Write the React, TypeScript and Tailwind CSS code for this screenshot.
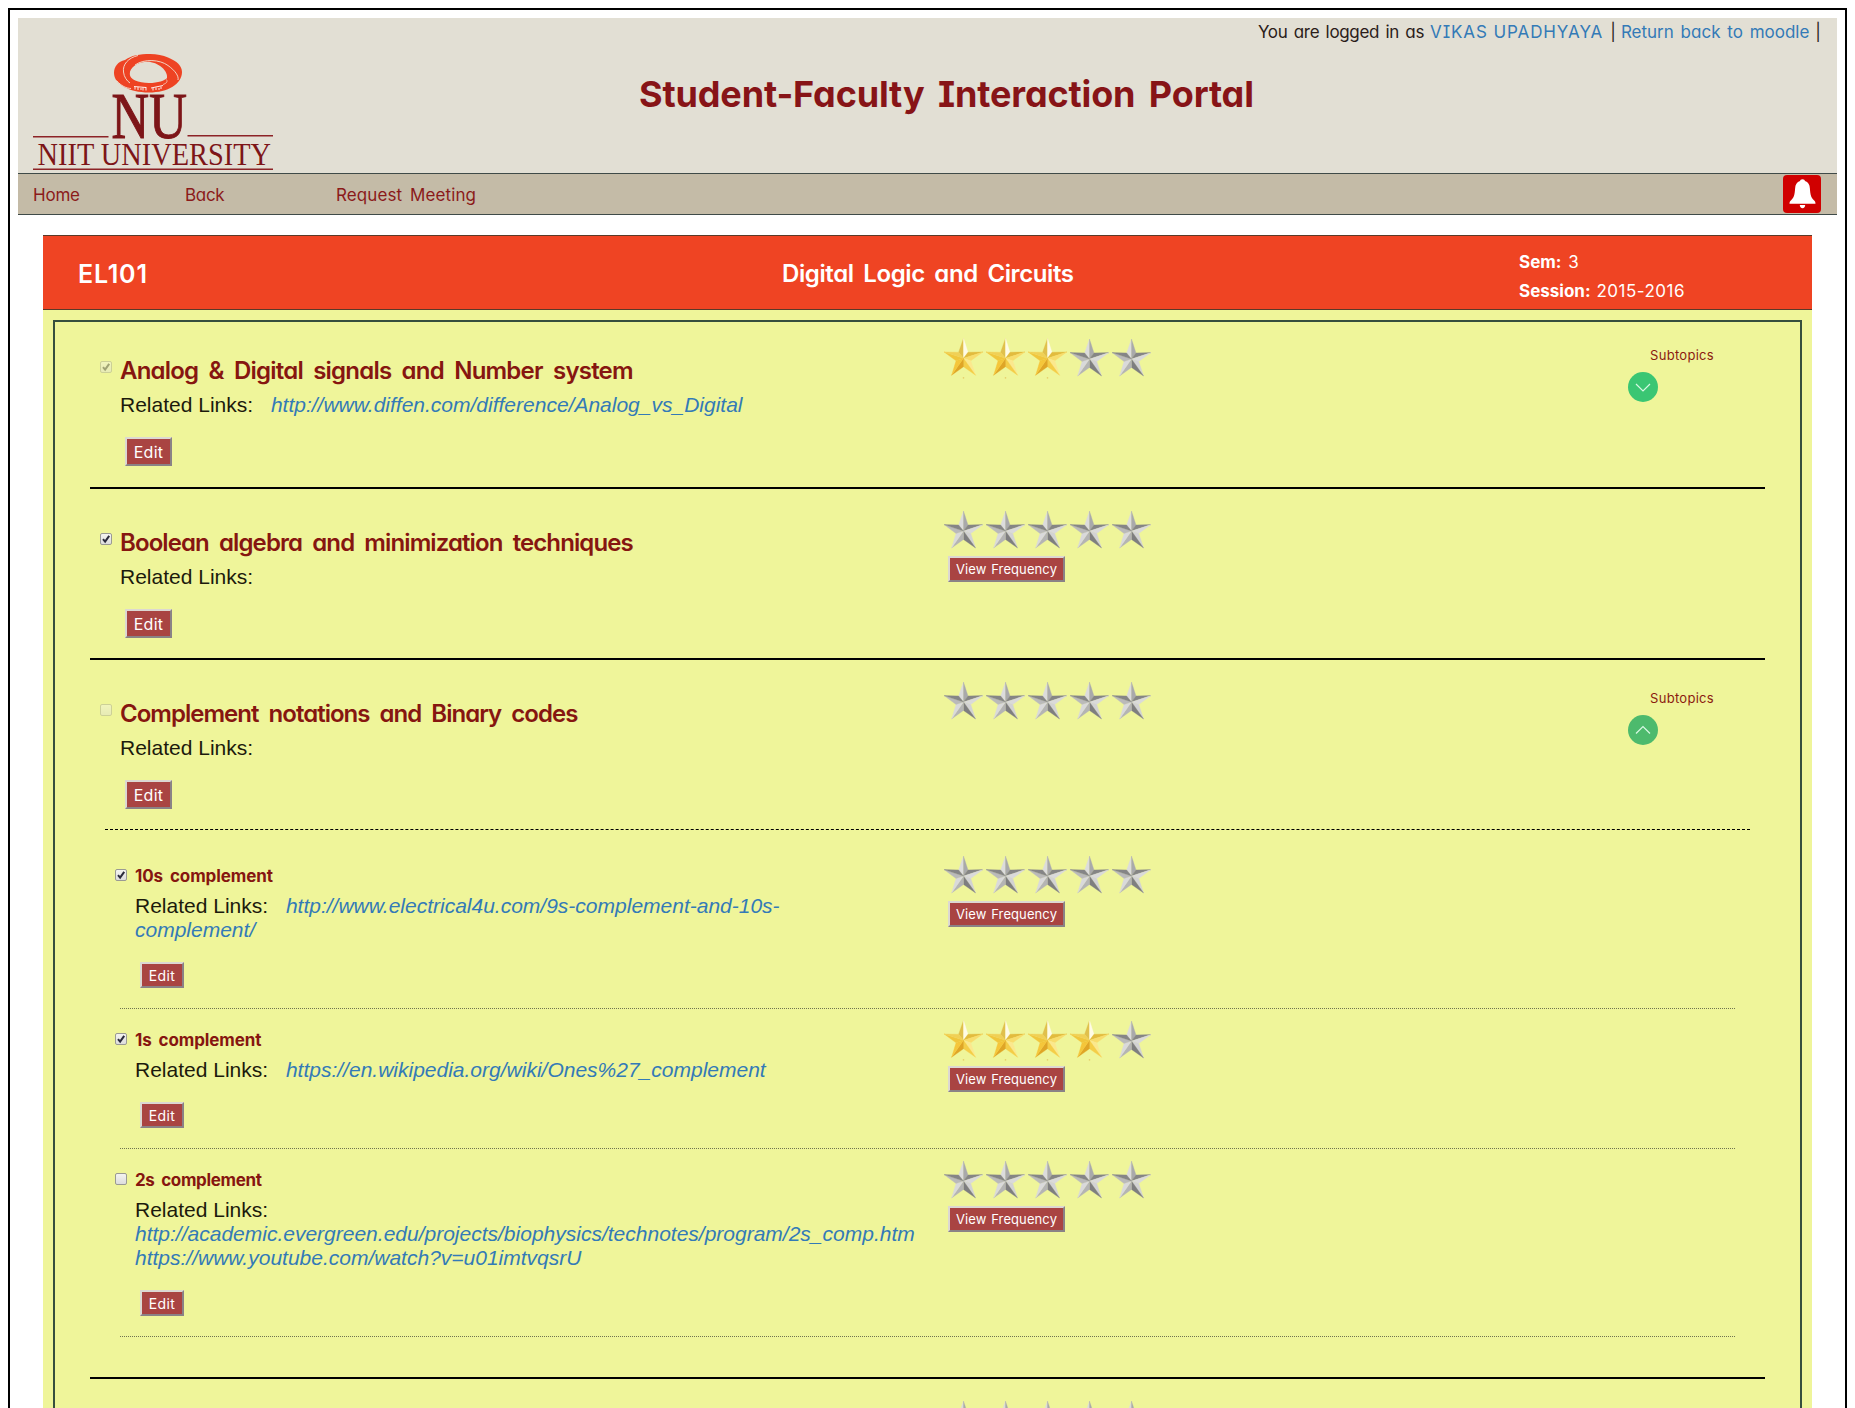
import type { ReactNode } from "react";

const COMIC =
  "font-['Comic_Sans_MS',Inter,sans-serif] [font-feature-settings:'cv11','cv08'] whitespace-nowrap";

function Logo() {
  return (
    <svg className="ml-[15px] mt-[32px] h-[123px] w-[241px] shrink-0 overflow-visible" viewBox="33 50 241 123">
      <path
        fill="#ee4323"
        fillRule="evenodd"
        d="M125 60 C131 55.5 140 54 150 54 C157 54 163 55.2 168 57.5 C177 61 182 66 182 72 C182 84 168 92.5 149 92.5 C129 92.5 114 84 114 73 C114 66.5 118 61.5 125 60 Z M146 61.800 C137 62.500 129.800 67.500 129.800 74 C129.800 79.500 138 83 149 83 C158 83 165 80.500 167 78 C167.500 75 166 71 162 67.500 C158 64 152 61.500 146 61.800 Z"
      />
      <g fill="none" stroke="#f3e3d4" strokeWidth="0.900">
        <path d="M138 55.500 C128 58 122.500 64.500 123.500 72 C124 77 127 81 130 83" />
        <path d="M135 65 C144 58.500 160 59.500 168 65.500 C175 70.500 179 76 178 80" />
        <path d="M116.500 80.500 C121 86 127 88.500 131 88.500" />
        <path d="M166.500 79.500 C168 82 166 83.500 163 84.500" strokeWidth="0.700" />
      </g>
      <path
        d="M134 86.500 L146 87.500 M135 87 v2.500 M138 87 v3 M140 89 h2 M143 87.500 v3 M146 87 v3.500 M151 88 L163 85.500 M153 88 v2.500 M156 87.500 v2.500 M158 89 h2 M161 86.500 v2.500"
        stroke="#fff"
        strokeWidth="0.900"
        fill="none"
      />
      <g fill="#7d1518" className="font-['Liberation_Serif',serif]">
        <text x="111.500" y="138" fontSize="65" textLength="37.500" lengthAdjust="spacingAndGlyphs" stroke="#7d1518" strokeWidth="1.200">
          N
        </text>
        <text x="149" y="138" fontSize="65" textLength="38" lengthAdjust="spacingAndGlyphs" stroke="#7d1518" strokeWidth="0.900">
          U
        </text>
        <text x="37.500" y="164.500" fontSize="30.500" textLength="233.500" lengthAdjust="spacingAndGlyphs">
          NIIT UNIVERSITY
        </text>
      </g>
      <path d="M33 136.800 H108.500 M187.500 135.700 H273 M33 169.300 H273" stroke="#8c2326" strokeWidth="1.500" />
    </svg>
  );
}

function BellButton() {
  return (
    <button className="mr-4 h-[38px] w-[38px] rounded bg-[#d00000]">
      <svg className="h-[38px] w-[38px]" viewBox="0 0 38 38" fill="#fff">
        <path d="M19.500 4.300 c1.600 0 2.300 .9 2.500 1.800 c3.200 1 4.700 3.800 4.900 7.400 c.4 6.500 1.300 9.300 4 11.700 c1.200 1 1.600 2 1.600 3.600 H6.500 c0-1.600 .4-2.600 1.600-3.600 c2.700-2.400 3.600-5.200 4-11.700 c.2-3.600 1.700-6.400 4.900-7.400 c.2-.9 .9-1.800 2.500-1.800Z" />
        <path d="M16.800 30 h5.400 c0 2-1.200 3.200-2.700 3.200 s-2.700-1.200-2.700-3.200Z" />
      </svg>
    </button>
  );
}

const FACETS = [
  "20.500,2 20.500,22 15.600,15.900",
  "20.500,2 25,15.900 20.500,22",
  "25,15.900 40,15.600 20.500,22",
  "40,15.600 27.800,24.500 20.500,22",
  "27.800,24.500 32.600,39 20.500,22",
  "32.600,39 20.500,30.500 20.500,22",
  "20.500,30.500 8.600,39 20.500,22",
  "8.600,39 13,24.500 20.500,22",
  "13,24.500 1,15.600 20.500,22",
  "1,15.600 15.600,15.900 20.500,22",
];
const SILVER = ["#dcdcdc", "#a9a9ab", "#858585", "#dadada", "#d2d2d4", "#7e7e80", "#b4b4b4", "#d9d9db", "#bababa", "#858587"];
const GOLD = ["#e0c04c", "#fffbe6", "#e2bb3e", "#f8dc6c", "#fbe88e", "#f4cd48", "#dfa526", "#f5c63a", "#f0c63c", "#f0d056"];

function Star({ gold }: { gold: boolean }) {
  const colors = gold ? GOLD : SILVER;
  return (
    <svg className="h-[42px] w-[42px]" viewBox={gold ? "0 0.700 42 42" : "0 0 42 42"}>
      {FACETS.map((points, i) => (
        <polygon key={i} points={points} fill={colors[i]} stroke={colors[i]} strokeWidth="0.300" />
      ))}
      {gold && <circle cx="20.500" cy="41.600" r="0.800" fill="#e6cf6a" />}
    </svg>
  );
}

function Stars({ rating }: { rating: number }) {
  return (
    <div className="flex">
      {[1, 2, 3, 4, 5].map((n) => (
        <Star key={n} gold={n <= rating} />
      ))}
    </div>
  );
}

const BEVEL =
  "border-2 border-t-[#dcd8d2] border-l-[#dcd8d2] border-r-[#8a8286] border-b-[#8a8286] bg-[#a94442] text-white flex items-center justify-center";

function EditButton({ small }: { small?: boolean }) {
  return small ? (
    <button className={`${COMIC} ${BEVEL} ml-[5px] mt-5 h-[26px] w-[44px] text-[14px] tracking-[0.4px]`}>Edit</button>
  ) : (
    <button className={`${COMIC} ${BEVEL} ml-[5px] mt-5 h-[29px] w-[47px] text-[16px] tracking-[0.3px]`}>Edit</button>
  );
}

function Checkbox({ checked, disabled }: { checked?: boolean; disabled?: boolean }) {
  const tone = disabled ? "opacity-40" : "";
  return (
    <span
      className={`${tone} block h-3 w-3 shrink-0 rounded-[2px] border border-[#9a9a94] bg-gradient-to-b from-[#f4f4f0] to-[#dddddd]`}
    >
      {checked && (
        <svg className="h-[10px] w-[10px]" viewBox="0 0 10 10">
          <path d="M2 5.200 L4.100 7.600 L8.200 1.800" fill="none" stroke="#2b2b3c" strokeWidth="2" />
        </svg>
      )}
    </span>
  );
}

function Subtopics({ open }: { open: boolean }) {
  const offset = open ? "mt-7" : "mt-[23px]";
  const color = open ? "bg-[#4dba6d]" : "bg-[#3ac673]";
  return (
    <div className={offset}>
      <div className={`${COMIC} ml-[22px] h-5 text-[13px] leading-5 tracking-[0.3px] text-[#8b1a10]`}>Subtopics</div>
      <div className={`${color} mt-[7px] h-[30px] w-[30px] rounded-full`}>
        <svg className="h-[30px] w-[30px]" viewBox="0 0 30 30" fill="none" stroke="#d8f8e4" strokeWidth="1.200">
          <path d={open ? "M8 18.500 L15 11.500 L22 18.500" : "M8 12 L15 19 L22 12"} />
        </svg>
      </div>
    </div>
  );
}

function Url({ children }: { children: ReactNode }) {
  return <a className="text-[#337ab7] italic">{children}</a>;
}

const LINKS = "font-['Liberation_Sans',Arial,sans-serif] text-[21px] leading-6 text-[#1c1a0c]";

type TopicProps = {
  title: string;
  titleClass: string;
  topClass: string;
  starClass: string;
  heightClass: string;
  rating: number;
  checked?: boolean;
  disabled?: boolean;
  links?: ReactNode;
  frequency?: boolean;
  subtopics?: "open" | "closed";
  small?: boolean;
};

function Topic(p: TopicProps) {
  return (
    <div className={`flex items-start ${p.heightClass}`}>
      <div className={`flex shrink-0 items-start ${p.topClass} ${p.small ? "w-[828px]" : "w-[843px]"}`}>
        <div className={`w-5 shrink-0 ${p.small ? "pt-[7px]" : "pt-[9px]"}`}>
          <Checkbox checked={p.checked} disabled={p.disabled} />
        </div>
        <div className={p.small ? "w-[785px]" : "w-[800px]"}>
          <h3
            className={`${COMIC} ${p.titleClass} ${
              p.small ? "h-[27px] text-[17px] leading-[29px] font-bold" : "h-[38px] text-[24px] leading-[38px] font-semibold"
            } text-[#861610]`}
          >
            {p.title}
          </h3>
          <div className={`${LINKS} ${p.small ? "mt-[5px]" : "mt-[3px]"}`}>Related Links: {p.links}</div>
          <EditButton small={p.small} />
        </div>
      </div>
      <div className={`w-[685px] shrink-0 ${p.starClass}`}>
        <Stars rating={p.rating} />
        {p.frequency && (
          <button className={`${COMIC} ${BEVEL} ml-[5px] mt-[5px] h-[26px] w-[117px] pt-[2px] text-[13px] tracking-[0.1px] [word-spacing:1px]`}>
            View Frequency
          </button>
        )}
      </div>
      {p.subtopics && <Subtopics open={p.subtopics === "open"} />}
    </div>
  );
}

export default function App() {
  return (
    <div className="h-[1408px] overflow-hidden bg-white px-2 pt-2">
      <div className="h-[1500px] border-2 border-black p-2">
        <header className="flex h-[155px] items-start bg-[#e2dfd4]">
          <Logo />
          <h1
            className={`${COMIC} ml-[365px] mt-[54px] w-[616px] text-[36px] leading-[44px] font-bold tracking-[-0.13px] text-[#871417] [word-spacing:5px]`}
          >
            Student-Faculty Interaction Portal
          </h1>
          <div className={`${COMIC} mr-[16px] ml-auto flex pt-[1px] text-[17px] leading-[26px] text-[#2b1d1a]`}>
            <span className="tracking-[-0.35px] [word-spacing:2px]">You are logged in as</span>
            <a className="ml-[6px] tracking-[0.9px] text-[#337ab7]">VIKAS UPADHYAYA</a>
            <span className="ml-[7px]">|</span>
            <a className="ml-[5px] text-[#337ab7] [word-spacing:2px]">Return back to moodle</a>
            <span className="ml-[6px]">|</span>
          </div>
        </header>
        <nav className={`${COMIC} flex h-[42px] items-center border-y border-[#3f4a48] bg-[#c4bba7] pl-[15px] text-[17px] text-[#8b1a1a]`}>
          <a className="w-[152px] pt-[3px] tracking-[-0.2px]">Home</a>
          <a className="w-[151px] pt-[3px] tracking-[-0.3px]">Back</a>
          <a className="pt-[3px] tracking-[0.1px] [word-spacing:3px]">Request Meeting</a>
          <div className="ml-auto flex">
            <BellButton />
          </div>
        </nav>

        <main className="mx-[25px] mt-5">
          <div className={`${COMIC} flex h-[75px] items-center border-y border-[#5a3a28] bg-[#ef4423] text-white`}>
            <div className="w-[739px] pt-1 pl-[35px] text-[25px] font-semibold tracking-[0.8px]">EL101</div>
            <div className="w-[737px] pt-[3px] text-[24px] font-semibold tracking-[-0.4px] [word-spacing:4px]">
              Digital Logic and Circuits
            </div>
            <div className="pt-[8px] text-[17px] leading-[29px]">
              <div>
                <b>Sem:</b> <span className="ml-[2px]">3</span>
              </div>
              <div>
                <b>Session:</b> <span className="ml-[1px] tracking-[0.5px]">2015-2016</span>
              </div>
            </div>
          </div>

          <div className="bg-[#eff59a] px-[10px] pt-[10px]">
            <section className="h-[1150px] border-2 border-[#364f3d] px-[35px]">
              <div className="border-b-2 border-black pl-[10px]">
                <Topic
                  title="Analog & Digital signals and Number system"
                  titleClass="tracking-[-0.78px] [word-spacing:5px]"
                  topClass="pt-[30px]"
                  starClass="pt-[15px]"
                  heightClass="h-[165px]"
                  rating={3}
                  checked
                  disabled
                  links={
                    <span className="ml-3">
                      <Url>http://www.diffen.com/difference/Analog_vs_Digital</Url>
                    </span>
                  }
                  subtopics="closed"
                />
              </div>
              <div className="border-b-2 border-black pl-[10px]">
                <Topic
                  title="Boolean algebra and minimization techniques"
                  titleClass="tracking-[-0.9px] [word-spacing:5px]"
                  topClass="pt-[35px]"
                  starClass="pt-5"
                  heightClass="h-[169px]"
                  rating={0}
                  checked
                  frequency
                />
              </div>
              <div className="border-b-2 border-black pb-[40px]">
                <div className="pl-[10px]">
                  <Topic
                    title="Complement notations and Binary codes"
                    titleClass="tracking-[-0.98px] [word-spacing:5px]"
                    topClass="pt-[35px]"
                    starClass="pt-5"
                    heightClass="h-[169px]"
                    rating={0}
                    disabled
                    subtopics="open"
                  />
                </div>
                <div className="mx-[15px] border-t border-dashed border-black px-[15px]">
                  <div className="-ml-[5px] h-[178px]">
                    <Topic
                      small
                      title="10s complement"
                      titleClass="tracking-[-0.1px] [word-spacing:3px]"
                      topClass="pt-8"
                      starClass="pt-6"
                      heightClass="h-[178px]"
                      rating={0}
                      checked
                      frequency
                      links={
                        <span className="ml-3">
                          <Url>
                            http://www.electrical4u.com/9s-complement-and-10s-
                            <br />
                            complement/
                          </Url>
                        </span>
                      }
                    />
                  </div>
                  <div className="border-y border-dotted border-[#6f7350]">
                    <div className="-ml-[5px]">
                      <Topic
                        small
                        title="1s complement"
                        titleClass="tracking-[-0.1px] [word-spacing:3px]"
                        topClass="pt-[17px]"
                        starClass="pt-[10px]"
                        heightClass="h-[139px]"
                        rating={4}
                        checked
                        frequency
                        links={
                          <span className="ml-3">
                            <Url>https://en.wikipedia.org/wiki/Ones%27_complement</Url>
                          </span>
                        }
                      />
                    </div>
                  </div>
                  <div className="border-b border-dotted border-[#6f7350]">
                    <div className="-ml-[5px]">
                      <Topic
                        small
                        title="2s complement"
                        titleClass="tracking-[-0.35px] [word-spacing:3px]"
                        topClass="pt-[17px]"
                        starClass="pt-[10px]"
                        heightClass="h-[187px]"
                        rating={0}
                        frequency
                        links={
                          <>
                            <br />
                            <Url>http://academic.evergreen.edu/projects/biophysics/technotes/program/2s_comp.htm</Url>
                            <br />
                            <Url>https://www.youtube.com/watch?v=u01imtvqsrU</Url>
                          </>
                        }
                      />
                    </div>
                  </div>
                </div>
              </div>
              <div className="pt-[20px] pl-[853px]">
                <Stars rating={0} />
              </div>
            </section>
          </div>
        </main>
      </div>
    </div>
  );
}
